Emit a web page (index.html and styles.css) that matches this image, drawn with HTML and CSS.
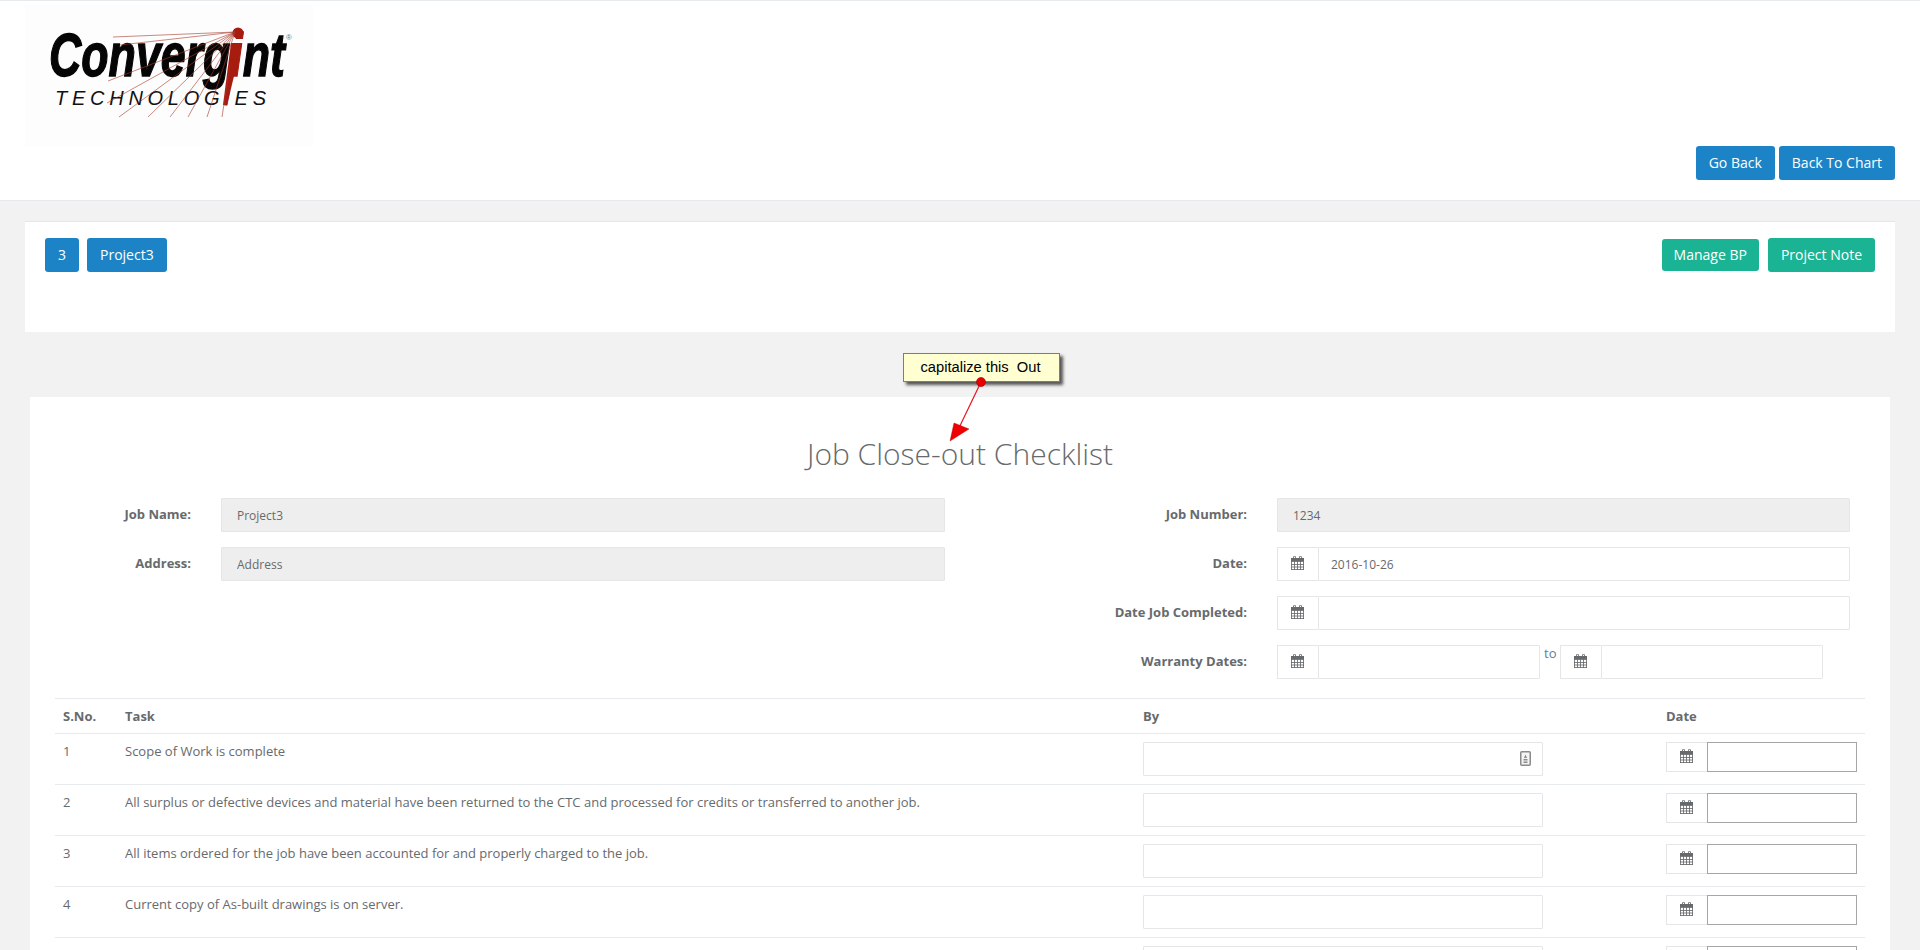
FILE: index.html
```html
<!DOCTYPE html>
<html lang="en">
<head>
<meta charset="utf-8">
<title>Job Close-out Checklist</title>
<link rel="stylesheet" href="styles.css">
</head>
<body>
<svg class="defs" width="0" height="0" aria-hidden="true">
  <symbol id="cal" viewBox="0 0 13 14">
    <path d="M2.5 2.5V1.2a1 1 0 0 1 2 0v1.3M8.500 2.5V1.2a1 1 0 0 1 2 0v1.3" fill="none" stroke="currentColor"/>
    <rect x="0" y="2" width="13" height="3" fill="currentColor"/>
    <path d="M.5 2v12M3.5 5v9M6.5 5v9M9.5 5v9M12.5 2v12M0 5.5h13M0 8.5h13M0 11h13M0 13.5h13" fill="none" stroke="currentColor" stroke-opacity=".85"/>
  </symbol>
</svg>

<header class="top">
  <div class="logo">
    <svg width="288" height="140" viewBox="0 0 288 140">
      <text class="logo-main" x="24" y="71" textLength="236" lengthAdjust="spacingAndGlyphs">Converg<tspan class="logo-i">i</tspan>nt</text>
      <path d="M206 38h11l-15 62h-4z" fill="#a81c10"/>
      <circle cx="213" cy="28" r="5.500" fill="#a81c10"/>
      <text class="logo-sub" x="30" y="100" textLength="211">TECHNOLOG<tspan class="logo-i">I</tspan>ES</text>
      <g stroke="#a5392a" stroke-width=".6" fill="none">
        <path d="M210 27L88 32M210 27L95 40M210 27L83 76M210 27L82 98M210 27L94 112M210 27L123 112M210 27L145 112M210 27L163 112M210 27L182 112M205 60L197 112"/>
      </g>
      <text class="logo-reg" x="261" y="35">®</text>
    </svg>
  </div>
  <div class="top-actions">
    <a class="btn blue">Go Back</a>
    <a class="btn blue">Back To Chart</a>
  </div>
</header>

<section class="project-bar">
  <div class="group-left">
    <a class="btn blue num">3</a>
    <a class="btn blue">Project3</a>
  </div>
  <div class="group-right">
    <a class="btn green short">Manage BP</a>
    <a class="btn green">Project Note</a>
  </div>
</section>

<main class="card">
  <h1 class="title">Job Close-out Checklist</h1>
  <div class="form">
    <div class="col col-left">
      <label class="lbl">Job Name:</label><input class="field off" value="Project3" disabled>
      <label class="lbl">Address:</label><input class="field off" value="Address" disabled>
    </div>
    <div class="col col-right">
      <label class="lbl">Job Number:</label><input class="field off" value="1234" disabled>
      <label class="lbl">Date:</label>
      <div class="igroup">
        <span class="addon"><svg class="ic"><use href="#cal"/></svg></span><input class="field grow date" value="2016-10-26">
      </div>
      <label class="lbl">Date Job Completed:</label>
      <div class="igroup">
        <span class="addon"><svg class="ic"><use href="#cal"/></svg></span><input class="field grow">
      </div>
      <label class="lbl">Warranty Dates:</label>
      <div class="warranty">
        <div class="igroup w1">
          <span class="addon"><svg class="ic"><use href="#cal"/></svg></span><input class="field grow">
        </div>
        <span class="to">to</span>
        <div class="igroup w1">
          <span class="addon"><svg class="ic"><use href="#cal"/></svg></span><input class="field grow">
        </div>
      </div>
    </div>
  </div>

  <table class="tasks">
    <colgroup><col class="c1"><col class="c2"><col class="c3"><col class="c4"></colgroup>
    <thead>
      <tr><th>S.No.</th><th>Task</th><th>By</th><th>Date</th></tr>
    </thead>
    <tbody>
      <tr>
        <td>1</td><td>Scope of Work is complete</td>
        <td><div class="by"><input class="field byf"><svg class="contact" width="11" height="15" viewBox="0 0 11 15"><rect x=".75" y=".75" width="9.5" height="13.5" rx="1" fill="#f4f4f4" stroke="#8a8a8a" stroke-width="1.5"/><path d="M5.5 3.5l1.5 3.5H4zM3.5 8h4v1.5h-4zM3.5 10.500h4V12h-4z" fill="#8a8a8a"/></svg></div></td>
        <td><div class="dgroup"><span class="addon small"><svg class="ic"><use href="#cal"/></svg></span><input class="plain"></div></td>
      </tr>
      <tr>
        <td>2</td><td>All surplus or defective devices and material have been returned to the CTC and processed for credits or transferred to another job.</td>
        <td><div class="by"><input class="field byf"></div></td>
        <td><div class="dgroup"><span class="addon small"><svg class="ic"><use href="#cal"/></svg></span><input class="plain"></div></td>
      </tr>
      <tr>
        <td>3</td><td>All items ordered for the job have been accounted for and properly charged to the job.</td>
        <td><div class="by"><input class="field byf"></div></td>
        <td><div class="dgroup"><span class="addon small"><svg class="ic"><use href="#cal"/></svg></span><input class="plain"></div></td>
      </tr>
      <tr>
        <td>4</td><td>Current copy of As-built drawings is on server.</td>
        <td><div class="by"><input class="field byf"></div></td>
        <td><div class="dgroup"><span class="addon small"><svg class="ic"><use href="#cal"/></svg></span><input class="plain"></div></td>
      </tr>
      <tr>
        <td></td><td></td>
        <td><div class="by"><input class="field byf"></div></td>
        <td><div class="dgroup"><span class="addon small"><svg class="ic"><use href="#cal"/></svg></span><input class="plain"></div></td>
      </tr>
    </tbody>
  </table>
</main>

<div class="note">capitalize this&nbsp; Out</div>
<svg class="note-arrow" width="60" height="80" viewBox="0 0 60 80">
  <path d="M41 8L17 58" stroke="#e8141c" stroke-width="1.2" fill="none"/>
  <path d="M10 67L14 49 29 55z" fill="#f00000" stroke="#a00" stroke-width=".4"/>
  <circle cx="41" cy="8" r="4.500" fill="#e60000" stroke="#900" stroke-width=".6"/>
</svg>
</body>
</html>
```

FILE: styles.css
```css
* { box-sizing: border-box; }
html, body { margin: 0; height: 950px; overflow: hidden; }
body {
  position: relative;
  background: #f2f2f2;
  color: #676a6c;
  font: 13px/18.57px "Open Sans", "Liberation Sans", sans-serif;
}
.defs { position: absolute; }

.top {
  height: 201px;
  background: #fff;
  border-top: 1px solid #e7eaec;
  border-bottom: 1px solid #e7eaec;
  padding: 4px 25px 0;
  display: flex;
  justify-content: space-between;
  align-items: flex-start;
}
.logo { background: #fdfdfd; width: 288px; height: 142px; }
.logo svg { display: block; }
.logo-main {
  font: italic 700 62px "Liberation Sans", sans-serif;
  fill: #050505;
  stroke: #050505;
  stroke-width: 1.4px;
}
.logo-i { fill: #a81c10; stroke: #a81c10; }
.logo-sub { font: italic 400 20px "Liberation Sans", sans-serif; fill: #111; }
.logo-reg { font: 8px "Liberation Sans", sans-serif; fill: #777; }
.top-actions { display: flex; gap: 4px; margin-top: 141px; }

.btn {
  display: flex;
  align-items: center;
  height: 34px;
  padding: 0 13px;
  border-radius: 3px;
  color: #fff;
  font-size: 14px;
  white-space: nowrap;
}
.blue { background: #1c84c6; }
.green { background: #1ab394; }
.num { width: 34px; padding: 0; justify-content: center; }
.short { height: 32px; padding: 0 12px; }

.project-bar {
  height: 111px;
  margin: 20px 25px 0;
  background: #fff;
  border-top: 1px solid #e7e7e7;
  padding: 16px 20px 0;
  display: flex;
  justify-content: space-between;
  align-items: flex-start;
}
.group-left, .group-right { display: flex; align-items: center; }
.group-left { gap: 8px; }
.group-right { gap: 9px; }

.card {
  margin: 65px 30px 0;
  background: #fff;
  padding: 36px 25px 0;
}
.title {
  margin: 0 0 23px;
  font-size: 30px;
  line-height: 42px;
  font-weight: 300;
  text-align: center;
  color: #676a6c;
}

.form { display: flex; justify-content: space-between; margin-left: -25px; margin-right: 15px; }
.col { display: grid; row-gap: 15px; column-gap: 30px; align-content: start; }
.col-left { grid-template-columns: 161px 724px; }
.col-right { grid-template-columns: 200px 573px; }
.lbl { font-weight: 700; text-align: right; line-height: 32px; }
.field {
  height: 34px;
  width: 100%;
  border: 1px solid #e5e6e7;
  border-radius: 1px;
  padding: 0 15px;
  background: #fff;
  color: #676a6c;
  font: 12px "Open Sans", "Liberation Sans", sans-serif;
  outline: none;
}
.off { background: #eee; }
.date { padding-left: 12px; }
.igroup { display: flex; }
.grow { flex: 1; min-width: 0; }
.addon {
  flex: none;
  width: 41px;
  height: 34px;
  border: 1px solid #e5e6e7;
  border-right: 0;
  display: flex;
  align-items: center;
  justify-content: center;
  background: #fff;
}
.addon.small { height: 30px; }
.ic { width: 13px; height: 14px; display: block; margin: -2px 0 0 -1px; }
.warranty { display: flex; align-items: flex-start; }
.w1 { width: 263px; }
.to { width: 20px; padding-left: 4px; line-height: 18px; margin-top: -1px; color: #5d7f99; }

.tasks {
  width: 1810px;
  margin-top: 19px;
  border-collapse: collapse;
  table-layout: fixed;
}
.c1 { width: 62px; }
.c2 { width: 1018px; }
.c3 { width: 523px; }
.c4 { width: 207px; }
.tasks th, .tasks td {
  border-top: 1px solid #e7eaec;
  padding: 8px;
  text-align: left;
  vertical-align: top;
  font-size: 13px;
  line-height: 18px;
}
.tasks th { font-weight: 700; height: 35px; }
.tasks td { height: 51px; }
.by { position: relative; width: 400px; }
.byf { display: block; }
.contact { position: absolute; right: 12px; top: 9px; }
.dgroup { display: flex; }
.plain {
  width: 150px;
  height: 30px;
  border: 1px solid #a6a6a6;
  background: #fff;
  padding: 0 4px;
  outline: none;
}

.note {
  position: absolute;
  left: 903px;
  top: 353px;
  width: 157px;
  height: 29px;
  padding-right: 2px;
  background: #ffffd2;
  border: 1px solid #7d7d7d;
  box-shadow: 3px 3px 3px #555;
  font: 14.7px/27px "Liberation Sans", sans-serif;
  color: #000;
  text-align: center;
}
.note-arrow { position: absolute; left: 940px; top: 374px; }
```
